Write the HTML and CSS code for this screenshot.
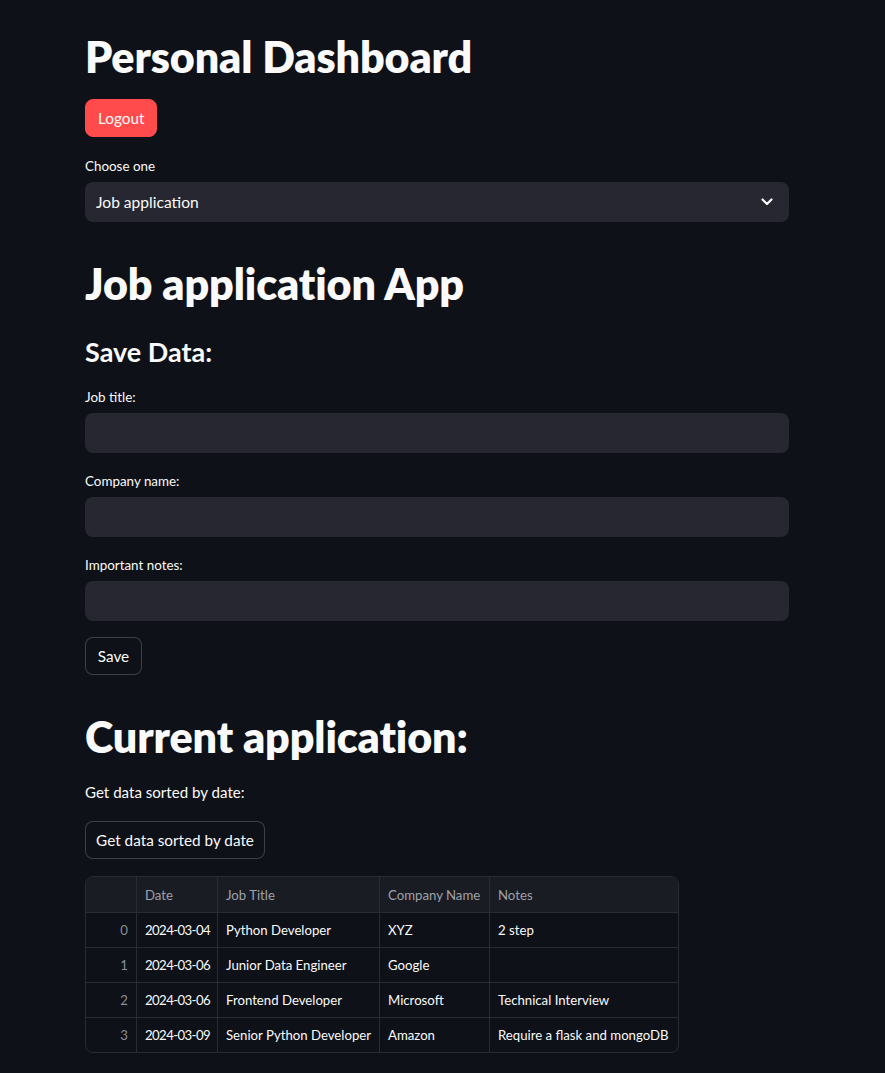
FILE: index.html
```html
<!DOCTYPE html>
<html>
<head>
<meta charset="utf-8">
<link rel="stylesheet" href="styles.css">
</head>
<body>
<main class="main">
  <h1 class="h1 title">Personal Dashboard</h1>
  <button class="btn btn-primary logout">Logout</button>
  <label class="label choose">Choose one</label>
  <div class="select">
    <span>Job application</span>
    <svg class="chev" width="12" height="8" viewBox="0 0 12 8"><path d="M1.5 1.5 L6 6 L10.5 1.5" fill="none" stroke="#fafafa" stroke-width="2.2" stroke-linecap="round" stroke-linejoin="round"/></svg>
  </div>
  <h1 class="h1 app">Job application App</h1>
  <h3 class="h3">Save Data:</h3>
  <label class="label f1">Job title:</label>
  <div class="input"></div>
  <label class="label f2">Company name:</label>
  <div class="input"></div>
  <label class="label f2">Important notes:</label>
  <div class="input"></div>
  <button class="btn btn-secondary save">Save</button>
  <h1 class="h1 current">Current application:</h1>
  <p class="text">Get data sorted by date:</p>
  <button class="btn btn-secondary getdata">Get data sorted by date</button>
  <div class="grid">
    <div class="cell head idx"></div><div class="cell head">Date</div><div class="cell head">Job Title</div><div class="cell head">Company Name</div><div class="cell head last">Notes</div>
    <div class="cell idx">0</div><div class="cell date">2024-03-04</div><div class="cell">Python Developer</div><div class="cell">XYZ</div><div class="cell last">2 step</div>
    <div class="cell idx">1</div><div class="cell date">2024-03-06</div><div class="cell">Junior Data Engineer</div><div class="cell">Google</div><div class="cell last"></div>
    <div class="cell idx">2</div><div class="cell date">2024-03-06</div><div class="cell">Frontend Developer</div><div class="cell">Microsoft</div><div class="cell last">Technical Interview</div>
    <div class="cell idx bottom">3</div><div class="cell date bottom">2024-03-09</div><div class="cell bottom">Senior Python Developer</div><div class="cell bottom">Amazon</div><div class="cell last bottom">Require a flask and mongoDB</div>
  </div>
</main>
</body>
</html>
```

FILE: styles.css
```css
html, body {
  margin: 0;
  padding: 0;
  background: #0e1117;
  color: #fafafa;
  font-family: Lato, "Noto Sans", sans-serif;
}
.main {
  width: 704px;
  margin-left: 85px;
  padding-top: 31px;
  display: flex;
  flex-direction: column;
  align-items: flex-start;
}
.h1 {
  margin: 0;
  font-size: 43px;
  line-height: 52px;
  font-weight: 800;
  letter-spacing: -0.1px;
}
.h3 {
  margin: 0;
  font-size: 27px;
  line-height: 34px;
  font-weight: 700;
}
.label {
  font-size: 13.4px;
  line-height: 20px;
  display: block;
}
.btn {
  font-family: inherit;
  font-size: 15.3px;
  color: #fafafa;
  border-radius: 8px;
  height: 38px;
  padding: 0 12px;
  cursor: pointer;
}
.btn-primary {
  background: #ff4b4b;
  border: 1px solid #ff4b4b;
}
.btn-secondary {
  background: #0e1117;
  border: 1px solid rgba(250, 250, 250, 0.2);
}
.logout { margin-top: 16px; width: 72px; }
.choose { margin-top: 19px; }
.select {
  margin-top: 6px;
  width: 704px;
  height: 40px;
  box-sizing: border-box;
  background: #262730;
  border-radius: 8px;
  display: flex;
  align-items: center;
  justify-content: space-between;
  padding: 0 16px 0 11px;
  font-size: 15.6px;
}
.app { margin-top: 36px; }
.h3 { margin-top: 25px; }
.f1 { margin-top: 18px; }
.f2 { margin-top: 18px; }
.input {
  margin-top: 6px;
  width: 704px;
  height: 40px;
  background: #262730;
  border-radius: 8px;
}
.save { margin-top: 16px; width: 57px; padding: 0; }
.current { margin-top: 36px; }
.text {
  margin: 17px 0 0;
  font-size: 15.1px;
  line-height: 24px;
}
.getdata { margin-top: 17px; width: 180px; padding: 0; }
.grid {
  margin-top: 17px;
  display: grid;
  grid-template-columns: 51px 81px 162px 110px 188px;
  border: 1px solid #2a2c34;
  border-radius: 8px;
  overflow: hidden;
  font-size: 13.2px;
}
.cell {
  height: 35px;
  box-sizing: border-box;
  display: flex;
  align-items: center;
  padding: 0 8px;
  white-space: nowrap;
  border-right: 1px solid #2a2c34;
  border-bottom: 1px solid #2a2c34;
  color: #fafafa;
}
.cell.date { letter-spacing: -0.6px; }
.cell.last { border-right: none; }
.cell.bottom { border-bottom: none; height: 34px; }
.cell.head {
  height: 36px;
  background: #1a1c24;
  color: #9ea1a9;
}
.cell.idx {
  justify-content: flex-end;
  color: #8b8e96;
}
```
